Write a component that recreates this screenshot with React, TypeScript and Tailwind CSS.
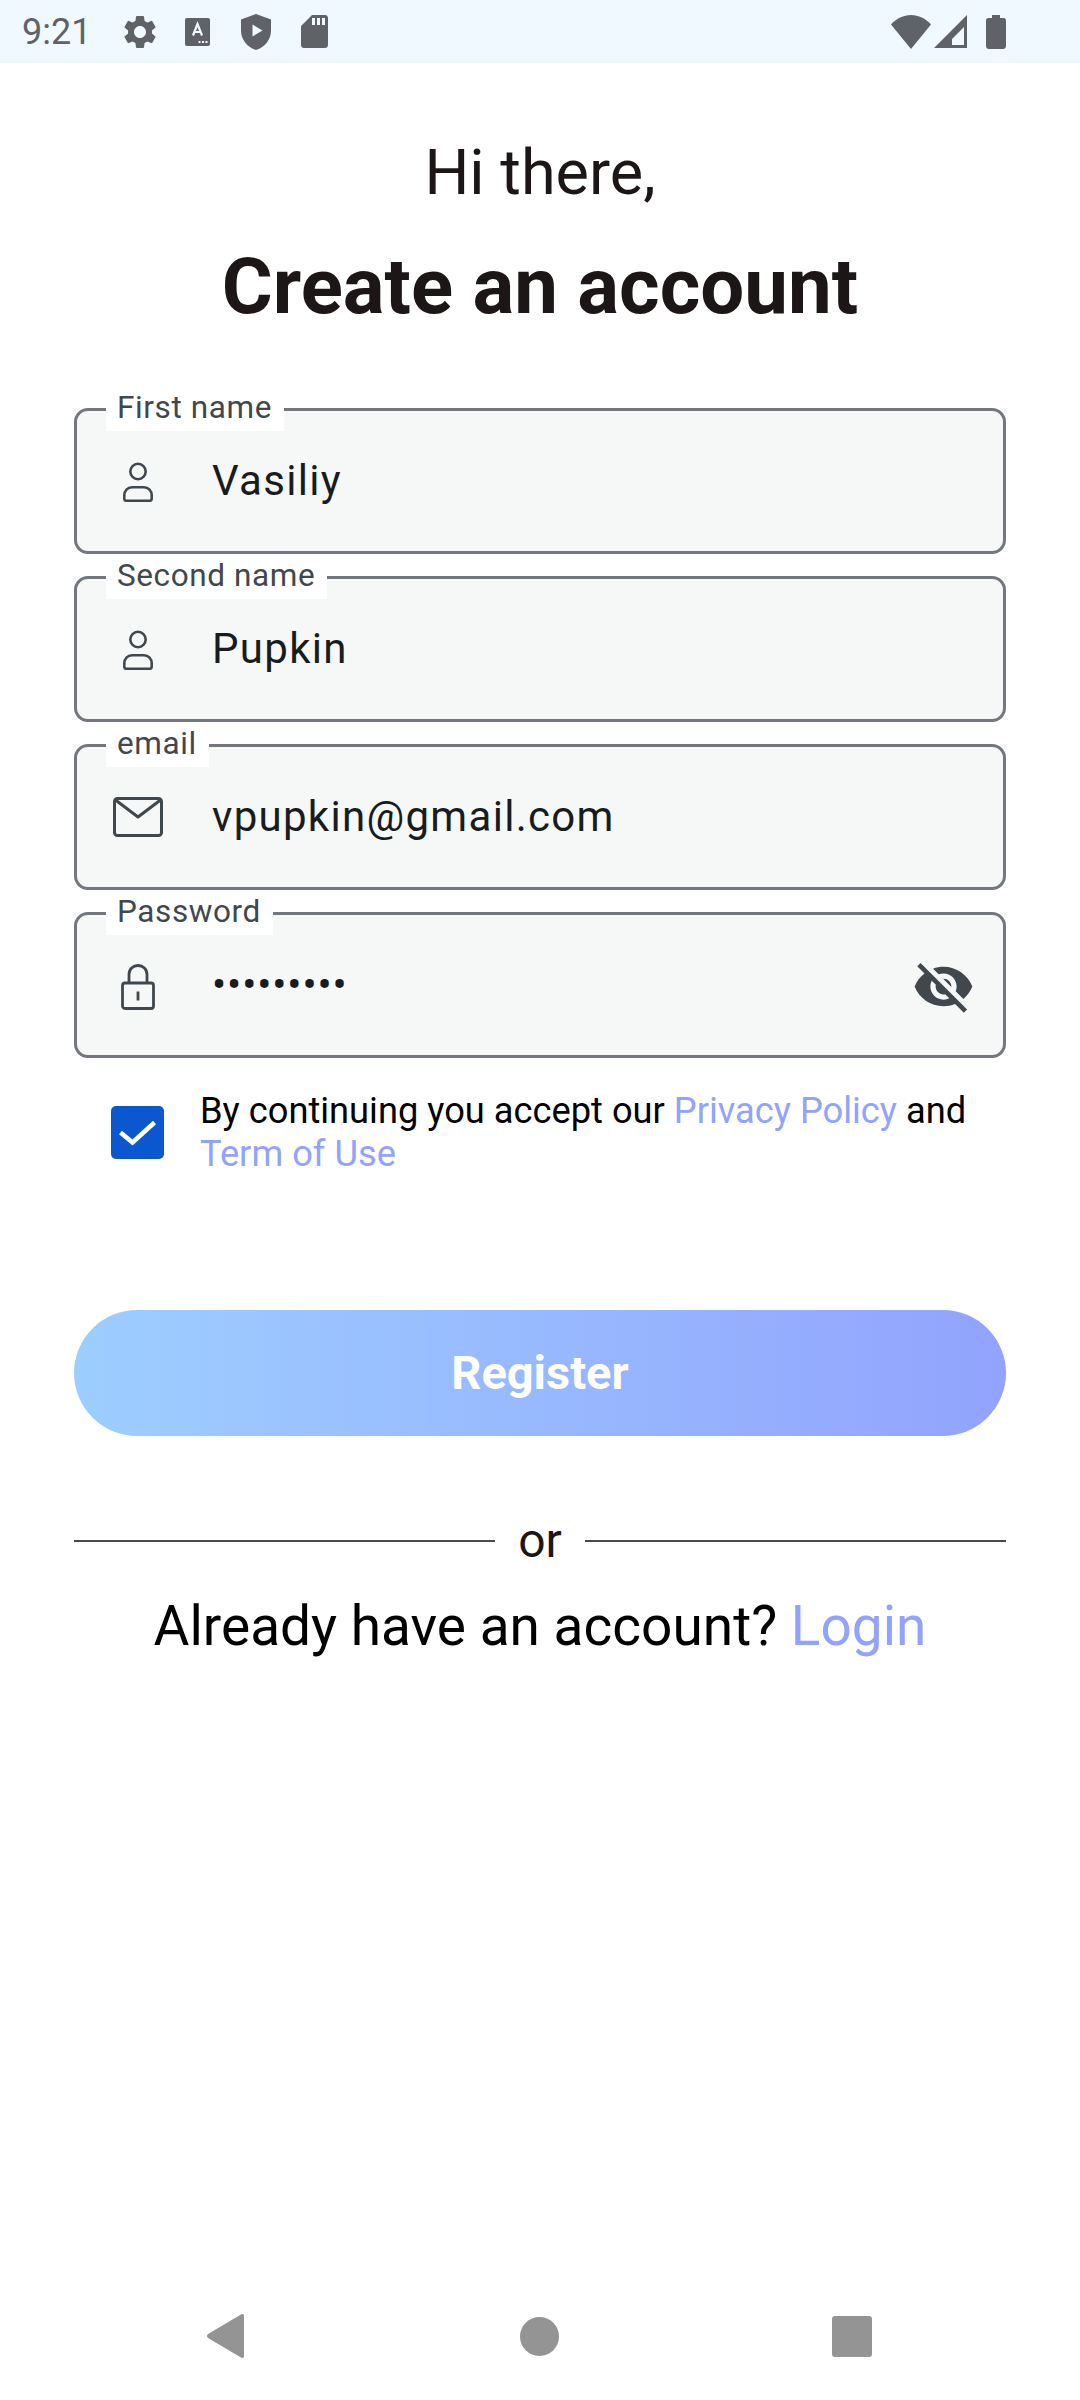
import React from "react";

const PersonIcon = () => (
  <svg className="w-[30px] h-[40px] mt-[2px]" viewBox="0 0 30 40" fill="none" stroke="#41484d" strokeWidth="2.600">
    <circle cx="15" cy="9.500" r="7.700" />
    <path d="M9 25.300h12c4.500 0 7.700 3.500 7.700 8v3.500c0 1-.8 2-2 2H3.300c-1.200 0-2-1-2-2v-3.500c0-4.500 3.200-8 7.700-8z" />
  </svg>
);

const MailIcon = () => (
  <svg className="w-[50px] h-[40px]" viewBox="0 0 50 40" fill="none" stroke="#41484d" strokeWidth="3" strokeLinejoin="round">
    <rect x="1.500" y="1.500" width="47" height="37" rx="3" />
    <path d="M2.500 3L25 20 47.500 3" />
  </svg>
);

const LockIcon = () => (
  <svg className="w-[34px] h-[46px] mt-[3px]" viewBox="0 0 34 46" fill="none" stroke="#41484d" strokeWidth="2.800">
    <path d="M8 19V10.500C8 5 12 1.500 17 1.500S26 5 26 10.500V19" />
    <rect x="1.500" y="19" width="31" height="25.500" rx="2.500" />
    <path d="M17 27.500v9" />
  </svg>
);

const EyeOffIcon = () => (
  <svg className="w-[63px] h-[63px] mt-[3px]" viewBox="0 0 24 24" fill="#41484d">
    <path d="M12 7c2.760 0 5 2.240 5 5 0 .650-.130 1.260-.360 1.830l2.920 2.920c1.510-1.260 2.700-2.890 3.430-4.750-1.730-4.390-6-7.500-11-7.500-1.400 0-2.740.250-3.980.700l2.160 2.160C10.740 7.130 11.350 7 12 7zM2 4.270l2.280 2.280.460.460C3.080 8.300 1.780 10.020 1 12c1.730 4.390 6 7.500 11 7.500 1.550 0 3.030-.300 4.380-.840l.420.420L19.730 22 21 20.730 3.270 3 2 4.270zM7.530 9.800l1.550 1.550c-.050.210-.080.430-.080.650 0 1.660 1.340 3 3 3 .220 0 .440-.030.650-.080l1.550 1.550c-.670.330-1.410.530-2.200.530-2.760 0-5-2.240-5-5 0-.790.200-1.530.530-2.200zm4.310-.780l3.150 3.150.020-.160c0-1.660-1.340-3-3-3l-.170.010z" />
  </svg>
);

const StatusBar = () => (
  <div className="h-[63px] bg-[#f0f9ff] flex items-center pl-[22px] pr-[74px] text-[#5f6368] shrink-0">
    <span className="text-[36px] leading-none w-[100px]">9:21</span>
    <svg className="w-[40px] h-[40px] ml-[-2px]" viewBox="0 0 24 24" fill="#5f6368">
      <path d="M19.140 12.940c.040-.300.060-.610.060-.940 0-.320-.020-.640-.070-.940l2.030-1.580c.180-.140.230-.410.120-.610l-1.920-3.320c-.120-.220-.370-.290-.590-.220l-2.390.960c-.500-.380-1.030-.700-1.620-.940l-.360-2.540c-.040-.240-.240-.410-.480-.410h-3.840c-.240 0-.430.170-.470.410l-.360 2.540c-.590.240-1.130.570-1.620.940l-2.390-.960c-.220-.080-.470 0-.590.220L2.740 8.870c-.120.210-.080.470.120.610l2.030 1.580c-.050.300-.090.630-.090.940s.020.640.070.940l-2.030 1.580c-.180.140-.230.410-.120.610l1.920 3.320c.120.220.370.290.590.220l2.390-.960c.500.380 1.030.700 1.620.940l.360 2.540c.050.240.240.410.480.410h3.840c.240 0 .440-.170.470-.410l.360-2.540c.590-.240 1.130-.560 1.620-.940l2.390.960c.220.080.470 0 .590-.220l1.920-3.320c.120-.220.070-.470-.12-.61l-2.010-1.580zM12 15.600c-1.980 0-3.600-1.620-3.600-3.600s1.620-3.600 3.600-3.600 3.600 1.620 3.600 3.600-1.620 3.600-3.600 3.600z" />
    </svg>
    <svg className="w-[25px] h-[28px] ml-[25px]" viewBox="0 0 25 28">
      <rect width="25" height="28" rx="2" fill="#5f6368" />
      <path d="M8 17.500L12.500 6l4.500 11.500M9.500 14h6" fill="none" stroke="#f0f9ff" strokeWidth="2.200" />
      <path d="M13.500 24h2M17 24h2M20.500 24h2" stroke="#f0f9ff" strokeWidth="2" />
    </svg>
    <svg className="w-[30px] h-[36px] ml-[31px]" viewBox="0 0 30 36">
      <path d="M15 0L30 5.500v11c0 9-6 16.500-15 19.500C6 33 0 25.500 0 16.500v-11z" fill="#5f6368" />
      <path d="M11.500 10.500v12l10-6z" fill="#f0f9ff" />
    </svg>
    <svg className="w-[27px] h-[33px] ml-[30px]" viewBox="0 0 27 33" fill="#5f6368">
      <path d="M11 0h13c1.700 0 3 1.300 3 3v27c0 1.700-1.300 3-3 3H3c-1.700 0-3-1.300-3-3V11zM11 3v7h3V3zm5 0v7h3V3zm5 0v7h3V3z" fillRule="evenodd" />
    </svg>
    <div className="flex-1" />
    <svg className="w-[40px] h-[34px] ml-[-2px] mr-[2px]" viewBox="0 0 40 34" fill="#5f6368">
      <path d="M20 34L0 9.500C5.500 3.500 12.500 0 20 0s14.500 3.500 20 9.500z" />
    </svg>
    <svg className="w-[33px] h-[33px] ml-[1px] mr-[2px]" viewBox="0 0 33 33" fill="#5f6368">
      <path fillRule="evenodd" d="M33 0v33H0zM30 12L18 24v6h12z" />
    </svg>
    <svg className="w-[20px] h-[34px] ml-[17px]" viewBox="0 0 20 34" fill="#5f6368">
      <path d="M6 0h8v3h3.500C19 3 20 4 20 5.500V31c0 1.700-1.300 3-3 3H3c-1.700 0-3-1.300-3-3V5.500C0 4 1 3 2.500 3H6z" />
    </svg>
  </div>
);

interface FieldProps {
  label: string;
  value: string;
  icon: React.ReactNode;
  trailing?: React.ReactNode;
  password?: boolean;
}

const Field: React.FC<FieldProps> = ({ label, value, icon, trailing, password }) => (
  <div className="relative h-[146px] rounded-[14px] border-[3px] border-[#72787e] bg-[#f6f8f8] flex items-center">
    <span className="absolute left-[29px] top-[-24px] h-[44px] pl-[11px] pr-[12px] bg-white text-[31.500px] leading-[42px] tracking-[0.600px] text-[#41484d]">
      {label}
    </span>
    <div className="w-[121px] flex justify-center">{icon}</div>
    <span className={password ? "ml-[14px] text-[42px] leading-none tracking-[0.900px] text-[#191c1e]" : "ml-[14px] text-[42px] leading-none tracking-[1.300px] text-[#191c1e]"}>
      {value}
    </span>
    {trailing && <div className="ml-auto mr-[28px]">{trailing}</div>}
  </div>
);

const App: React.FC = () => {
  return (
    <div className="w-[1080px] h-[2400px] bg-white flex flex-col font-['Roboto',sans-serif]">
      <StatusBar />
      <div className="flex-1 px-[74px]">
        <h2 className="mt-[71px] text-center text-[63px] leading-[78px] text-[#1d1617]">Hi there,</h2>
        <h1 className="mt-[25px] text-center text-[78px] leading-[100px] font-bold text-[#1d1617]">Create an account</h1>
        <div className="mt-[71px] flex flex-col gap-[22px]">
          <Field label="First name" value="Vasiliy" icon={<PersonIcon />} />
          <Field label="Second name" value="Pupkin" icon={<PersonIcon />} />
          <Field label="email" value="vpupkin@gmail.com" icon={<MailIcon />} />
          <Field label="Password" value="•••••••••" icon={<LockIcon />} trailing={<EyeOffIcon />} password />
        </div>
        <div className="mt-[31px] flex items-center pl-[37px]">
          <div className="w-[53px] h-[53px] rounded-[5px] bg-[#0b57d0] flex items-center justify-center shrink-0">
            <svg className="w-[40px] h-[30px]" viewBox="0 0 40 30" fill="none" stroke="#ffffff" strokeWidth="4.500">
              <path d="M2.500 15.500l12 10 22-20" />
            </svg>
          </div>
          <p className="ml-[36px] text-[36.250px] leading-[43px] text-black">
            By continuing you accept our <span className="text-[#92a3fd]">Privacy Policy</span> and{" "}
            <span className="text-[#92a3fd]">Term of Use</span>
          </p>
        </div>
        <div className="mt-[135px] h-[126px] rounded-full bg-gradient-to-r from-[#9dceff] to-[#92a3fd] flex items-center justify-center text-white text-[47px] font-bold">
          Register
        </div>
        <div className="mt-[77px] flex items-center">
          <div className="flex-1 h-[2px] bg-[#4b4b4b]" />
          <span className="w-[90px] text-center text-[48px] leading-[56px] text-[#1d1617]">or</span>
          <div className="flex-1 h-[2px] bg-[#4b4b4b]" />
        </div>
        <p className="mt-[24px] text-center text-[55px] leading-[66px] text-black">
          Already have an account? <span className="text-[#92a3fd]">Login</span>
        </p>
      </div>
      <div className="h-[126px] flex items-center pl-[207px] pb-[2px] shrink-0">
        <svg className="w-[37px] h-[44px]" viewBox="0 0 37 44" fill="#949494">
          <path d="M37 2v40c0 2-1.500 2.500-3 1.500L1 24c-1.300-1-1.300-3 0-4L34 .5C35.500-.500 37 0 37 2z" />
        </svg>
        <div className="ml-[276px] w-[39px] h-[39px] rounded-full bg-[#949494]" />
        <div className="ml-[273px] w-[40px] h-[41px] rounded-[3px] bg-[#949494]" />
      </div>
    </div>
  );
};

export default App;
